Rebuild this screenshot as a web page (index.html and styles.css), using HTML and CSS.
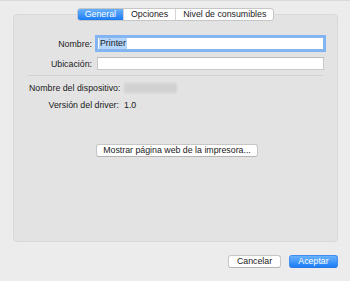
FILE: index.html
```html
<!DOCTYPE html>
<html lang="es">
<head>
<meta charset="utf-8">
<link rel="stylesheet" href="styles.css">
</head>
<body>
<div class="window">
  <div class="tabs">
    <div class="tab tab-active">General</div>
    <div class="tab">Opciones</div>
    <div class="tab">Nivel de consumibles</div>
  </div>
  <div class="panel">
    <div class="form">
      <label class="label">Nombre:</label>
      <div class="input input-focus"><span class="selected">Printer</span></div>
      <label class="label">Ubicación:</label>
      <div class="input"></div>
    </div>
    <div class="separator"></div>
    <div class="info">
      <div class="label">Nombre del dispositivo:</div>
      <div class="value"><div class="blurred"></div></div>
      <div class="label">Versión del driver:</div>
      <div class="value">1.0</div>
    </div>
    <div class="web-row">
      <button class="btn btn-web">Mostrar página web de la impresora...</button>
    </div>
  </div>
  <div class="footer">
    <button class="btn btn-cancel">Cancelar</button>
    <button class="btn btn-primary">Aceptar</button>
  </div>
</div>
</body>
</html>
```
FILE: styles.css
```css
* { box-sizing: border-box; }
html, body {
  margin: 0;
  padding: 0;
  width: 350px;
  height: 281px;
  overflow: hidden;
  background: #ececec;
}
body {
  font-family: "Liberation Sans", Arial, sans-serif;
  font-size: 8.8px;
  color: #1a1a1a;
}
.window {
  border-top: 1px solid #d9d9d9;
  padding-top: 7px;
  height: 281px;
  display: flex;
  flex-direction: column;
}
.tabs {
  position: relative;
  z-index: 1;
  align-self: center;
  display: flex;
  height: 13px;
  margin-left: 1px;
  border: 1px solid #c6c6c6;
  border-radius: 3px;
  background: #fff;
  overflow: hidden;
}
.tab {
  padding: 0 7px;
  line-height: 11px;
  border-left: 1px solid #d4d4d4;
  color: #1a1a1a;
}
.tab:first-child { border-left: none; }
.tab-active {
  background: linear-gradient(#69b1fa, #1a7cf5);
  color: #fff;
  border-left: none;
}
.panel {
  margin: -7px 12px 0 13px;
  height: 228px;
  background: #e3e3e3;
  border: 1px solid #d9d9d9;
  border-radius: 4px;
  padding: 22px 13px 0 15px;
  display: flex;
  flex-direction: column;
}
.form {
  display: grid;
  grid-template-columns: 1fr 227px;
  column-gap: 5px;
  row-gap: 7px;
  align-items: center;
}
.label {
  text-align: right;
  white-space: nowrap;
  color: #1a1a1a;
}
.input {
  height: 13px;
  background: #fff;
  border: 1px solid #c8c8c8;
  border-top-color: #b9b9b9;
  padding-left: 1px;
  line-height: 11px;
}
.input-focus {
  box-shadow: 0 0 0 2px #80b5f5;
  border-color: #8ab6ea;
}
.selected {
  background: #b4d5fd;
  padding: 0 1px;
  display: inline-block;
  height: 11px;
}
.separator {
  margin-top: 5px;
  height: 1px;
  background: #d2d2d2;
  margin-left: -1px;
  margin-right: 1px;
}
.info {
  margin-top: 7px;
  display: grid;
  grid-template-columns: 90px 1fr;
  column-gap: 5px;
  row-gap: 6px;
  align-items: center;
}
.info .label, .value {
  height: 11px;
  line-height: 11px;
}
.blurred {
  width: 53px;
  height: 10px;
  background: #d2d2d2;
  border-radius: 2px;
  filter: blur(1px);
}
.web-row {
  margin-top: 33px;
  display: flex;
  justify-content: center;
}
.btn {
  font-family: "Liberation Sans", Arial, sans-serif;
  font-size: 8.8px;
  height: 13px;
  padding: 0;
  line-height: 11px;
  background: #fff;
  color: #1a1a1a;
  border: 1px solid #c6c6c6;
  border-bottom-color: #b4b4b4;
  border-radius: 3px;
  text-align: center;
}
.btn-web { width: 162px; margin-left: 1px; }
.footer {
  margin-top: 13px;
  padding-right: 12px;
  display: flex;
  justify-content: flex-end;
  gap: 8px;
}
.btn-cancel { width: 53px; }
.btn-primary {
  width: 49px;
  background: linear-gradient(#6ab2fb, #1b7df6);
  border-color: #3f8ff2;
  border-bottom-color: #2a78e0;
  color: #fff;
}
```
